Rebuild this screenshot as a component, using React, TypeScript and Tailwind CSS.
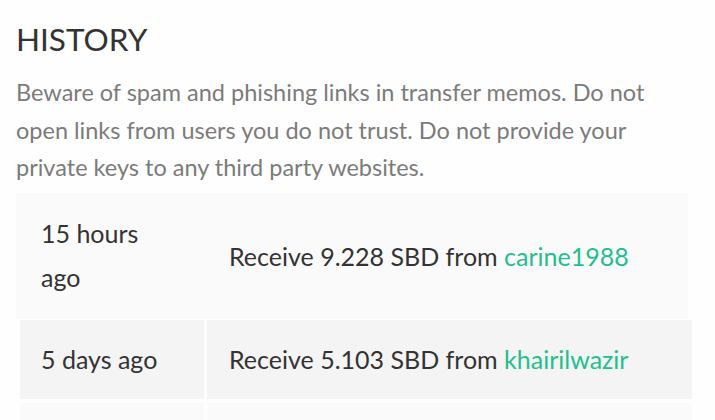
import React from 'react';

type Transfer = {
  id: number;
  when: string;
  amount: string;
  from: string;
};

const transfers: Transfer[] = [
  { id: 1, when: '15 hours ago', amount: '9.228 SBD', from: 'carine1988' },
  { id: 2, when: '5 days ago', amount: '5.103 SBD', from: 'khairilwazir' },
];

export default function App() {
  return (
    <div
      className="min-h-screen w-[715px] h-[420px] overflow-hidden bg-[#fefefe] text-[#333]"
      style={{ fontFamily: 'Lato, "Open Sans", sans-serif' }}
    >
      <div className="pl-[16px] pt-[17px]">
        {/* Title block */}
        <h2 className="text-[31.5px] leading-[44px] font-normal text-[#333]">HISTORY</h2>
        <p className="mt-[13px] w-[672px] text-[23.5px] leading-[37.5px] text-[#7b7b7b]">
          Beware of spam and phishing links in transfer memos. Do not open links from users you do not trust. Do not
          provide your private keys to any third party websites.
        </p>
      </div>

      {/* Transfer rows */}
      <div className="mt-[6px] flex flex-col gap-[1px]">
        <div className="ml-[16px] flex w-[672px] bg-[#fafafa]">
          <div className="w-[191px] shrink-0 pt-[18px] pb-[20px] pl-[25px] pr-[36px] text-[25px] leading-[44px]">
            {transfers[0].when}
          </div>
          <div className="flex items-center pl-[22px] text-[25px] leading-[44px]">
            <span>
              Receive {transfers[0].amount} from <span className="text-[#1fbf8f]">{transfers[0].from}</span>
            </span>
          </div>
        </div>

        <div className="ml-[20px] flex w-[672px] gap-[3px]">
          <div className="w-[184px] shrink-0 bg-[#f4f4f4] py-[17.5px] pl-[21px] text-[25px] leading-[44px]">
            {transfers[1].when}
          </div>
          <div className="flex flex-1 items-center bg-[#f4f4f4] pl-[22px] text-[25px] leading-[44px]">
            <span>
              Receive {transfers[1].amount} from <span className="text-[#1fbf8f]">{transfers[1].from}</span>
            </span>
          </div>
        </div>

        <div className="mt-[3px] ml-[20px] flex h-[40px] w-[672px] gap-[3px]">
          <div className="w-[184px] shrink-0 bg-[#fafafa]" />
          <div className="flex-1 bg-[#fafafa]" />
        </div>
      </div>
    </div>
  );
}
